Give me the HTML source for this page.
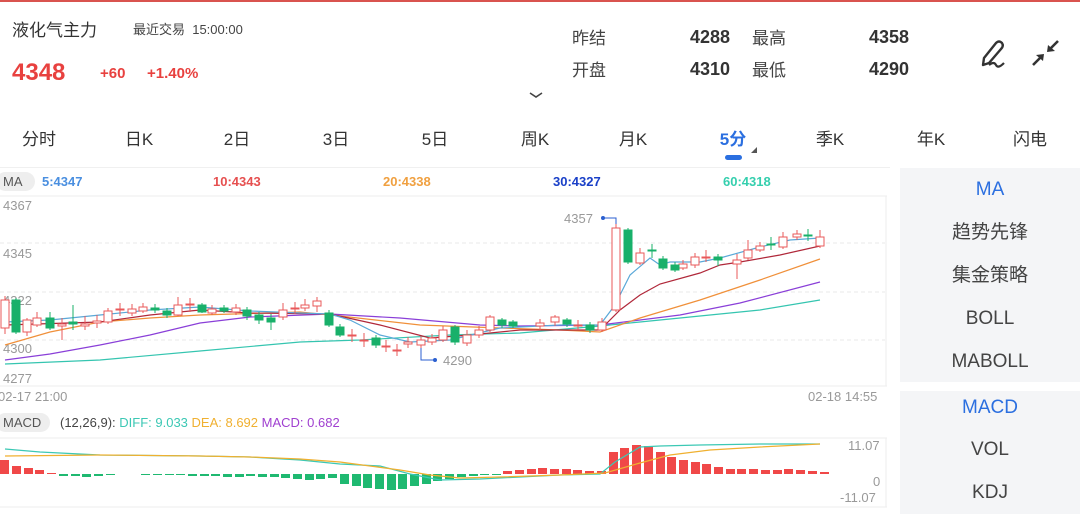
<!DOCTYPE html>
<html><head><meta charset="utf-8"><style>
*{margin:0;padding:0;box-sizing:border-box}
body{width:1080px;height:514px;background:#fff;position:relative;overflow:hidden;font-family:"Liberation Sans","Noto Sans CJK SC",sans-serif;color:#333}
.a{position:absolute;white-space:nowrap}
.tab{position:absolute;top:125px;font-size:17px;color:#333;transform:translateX(-50%)}
.side{position:absolute;left:900px;width:180px;background:#f4f5f7}
.si{position:absolute;left:900px;width:180px;text-align:center;font-size:19px;color:#444}
</style></head><body>
<div class="a" style="left:0;top:0;width:1080px;height:2px;background:#d9534f"></div>
<div class="a" style="left:12px;top:16px;font-size:17px;color:#333">液化气主力</div>
<div class="a" style="left:133px;top:19px;font-size:13px;color:#444">最近交易&nbsp; 15:00:00</div>
<div class="a" style="left:12px;top:59px;font-size:24px;font-weight:bold;color:#e8413f">4348</div>
<div class="a" style="left:100px;top:65px;font-size:15px;font-weight:bold;color:#e8413f">+60</div>
<div class="a" style="left:147px;top:65px;font-size:15px;font-weight:bold;color:#e8413f">+1.40%</div>
<div class="a" style="left:572px;top:24px;font-size:17px;color:#444">昨结</div>
<div class="a" style="left:572px;top:56px;font-size:17px;color:#444">开盘</div>
<div class="a" style="left:690px;top:27px;font-size:18px;font-weight:bold;color:#333">4288</div>
<div class="a" style="left:690px;top:59px;font-size:18px;font-weight:bold;color:#333">4310</div>
<div class="a" style="left:752px;top:24px;font-size:17px;color:#444">最高</div>
<div class="a" style="left:752px;top:56px;font-size:17px;color:#444">最低</div>
<div class="a" style="left:869px;top:27px;font-size:18px;font-weight:bold;color:#333">4358</div>
<div class="a" style="left:869px;top:59px;font-size:18px;font-weight:bold;color:#333">4290</div>
<svg class="a" style="left:528px;top:90px" width="16" height="10"><path d="M2 3 L8 7 L14 3" stroke="#444" stroke-width="1.6" fill="none"/></svg>
<svg class="a" style="left:976px;top:34px" width="90" height="40" viewBox="0 0 90 40">
<path d="M8 24 L20 9 Q23 6 26 9 Q28 12 25 15 L13 29 L7 31 Z" stroke="#333" stroke-width="2.4" fill="none" stroke-linejoin="round"/>
<path d="M13 31 Q18 27 20 31 Q22 35 28 29" stroke="#333" stroke-width="2.2" fill="none"/>
<path d="M57 31 L66 22" stroke="#333" stroke-width="2.6"/><path d="M68 20 L60 21 L67 27 Z" fill="#333"/>
<path d="M82 7 L73 16" stroke="#333" stroke-width="2.6"/><path d="M71 18 L79 17 L72 11 Z" fill="#333"/>
</svg>
<div class="tab" style="left:39px">分时</div>
<div class="tab" style="left:139px">日K</div>
<div class="tab" style="left:237px">2日</div>
<div class="tab" style="left:336px">3日</div>
<div class="tab" style="left:435px">5日</div>
<div class="tab" style="left:535px">周K</div>
<div class="tab" style="left:633px">月K</div>
<div class="tab" style="left:733px;color:#2b6fe0;font-weight:bold">5分</div>
<svg class="a" style="left:750px;top:146px" width="8" height="8"><path d="M7 1 L7 7 L1 7 Z" fill="#555"/></svg>
<div class="a" style="left:725px;top:155px;width:17px;height:5px;border-radius:3px;background:#2b6fe0"></div>
<div class="tab" style="left:830px">季K</div>
<div class="tab" style="left:931px">年K</div>
<div class="tab" style="left:1030px">闪电</div>

<div class="side" style="top:168px;height:214px"></div>
<div class="side" style="top:391px;height:123px"></div>
<div class="si" style="top:179px;color:#2b6fe0">MA</div>
<div class="si" style="top:217px">趋势先锋</div>
<div class="si" style="top:260px">集金策略</div>
<div class="si" style="top:308px">BOLL</div>
<div class="si" style="top:351px">MABOLL</div>
<div class="si" style="top:397px;color:#2b6fe0">MACD</div>
<div class="si" style="top:439px">VOL</div>
<div class="si" style="top:482px">KDJ</div>

<div class="a" style="left:0;top:167px;width:890px;height:1px;background:#f0f0f0"></div>
<div class="a" style="left:-4px;top:172px;width:39px;height:19px;border-radius:10px;background:#eeeeee;font-size:13px;color:#555;padding-left:7px;line-height:19px">MA</div>
<div class="a" style="left:42px;top:174px;font-size:13px;font-weight:bold;color:#4a8fe0">5:4347</div>
<div class="a" style="left:213px;top:174px;font-size:13px;font-weight:bold;color:#e65050">10:4343</div>
<div class="a" style="left:383px;top:174px;font-size:13px;font-weight:bold;color:#f0a040">20:4338</div>
<div class="a" style="left:553px;top:174px;font-size:13px;font-weight:bold;color:#1a40c8">30:4327</div>
<div class="a" style="left:723px;top:174px;font-size:13px;font-weight:bold;color:#35cfae">60:4318</div>

<div class="a" style="left:3px;top:198px;font-size:13px;color:#999">4367</div>
<div class="a" style="left:3px;top:246px;font-size:13px;color:#999">4345</div>
<div class="a" style="left:3px;top:293px;font-size:13px;color:#999">4322</div>
<div class="a" style="left:3px;top:341px;font-size:13px;color:#999">4300</div>
<div class="a" style="left:3px;top:371px;font-size:13px;color:#999">4277</div>
<div class="a" style="left:-2px;top:389px;font-size:13px;color:#999">02-17 21:00</div>
<div class="a" style="left:808px;top:389px;font-size:13px;color:#999">02-18 14:55</div>

<div class="a" style="left:-4px;top:413px;width:54px;height:19px;border-radius:10px;background:#eeeeee;font-size:13px;color:#555;padding-left:7px;line-height:19px">MACD</div>
<div class="a" style="left:60px;top:415px;font-size:13px;color:#444">(12,26,9): <span style="color:#3cc8b4">DIFF: 9.033</span> <span style="color:#f0b030">DEA: 8.692</span> <span style="color:#a040d0">MACD: 0.682</span></div>
<div class="a" style="left:848px;top:438px;font-size:13px;color:#999">11.07</div>
<div class="a" style="left:873px;top:474px;font-size:13px;color:#999">0</div>
<div class="a" style="left:840px;top:490px;font-size:13px;color:#999">-11.07</div>

<svg class="a" style="left:0;top:0" width="900" height="514">
<g stroke="#e8e8e8" stroke-width="1" stroke-dasharray="4 3">
<line x1="0" y1="243" x2="885" y2="243"/><line x1="0" y1="292" x2="885" y2="292"/><line x1="0" y1="340" x2="885" y2="340"/>
</g>
<g stroke="#eeeeee"><line x1="0" y1="196" x2="887" y2="196"/><line x1="0" y1="386" x2="887" y2="386"/><line x1="886" y1="196" x2="886" y2="386"/>
<line x1="0" y1="438" x2="887" y2="438"/><line x1="0" y1="507" x2="887" y2="507"/><line x1="886" y1="438" x2="886" y2="507"/></g>
<g fill="none" stroke-width="1.2">
<polyline stroke="#35c5b0" points="5,364 100,360 200,351 300,342 360,340 450,335 520,333 600,326 680,318 760,310 820,300"/>
<polyline stroke="#8a3fd8" points="5,360 50,354 100,345 150,335 200,323 250,317 330,314 400,318 480,325 520,326 600,325 680,315 740,303 820,282"/>
<polyline stroke="#f0903a" points="5,345 50,332 100,322 150,318 200,315 300,312 340,316 420,325 500,328 560,330 600,332 640,318 700,300 760,280 820,259"/>
<polyline stroke="#b0283a" points="5,325 100,322 150,315 200,310 250,313 330,314 380,325 430,338 470,335 520,330 600,330 620,310 640,295 660,284 700,273 720,265 740,262 780,255 820,246"/>
<polyline stroke="#5aa8d8" points="5,322 50,320 100,315 150,310 200,307 250,311 300,313 330,314 350,320 380,335 410,342 450,340 500,328 560,325 600,325 615,305 630,275 650,258 660,265 670,262 700,262 720,258 760,247 790,240 820,238"/>
</g>
<g stroke="#e8585a" fill="#fff" stroke-width="1">
<line x1="5" y1="296" x2="5" y2="334"/><rect x="1" y="300" width="8" height="28"/>
<line x1="27" y1="318" x2="27" y2="336"/><rect x="23" y="320" width="8" height="12"/>
<line x1="37" y1="312" x2="37" y2="327"/><rect x="33" y="318" width="8" height="7"/>
<line x1="62" y1="318" x2="62" y2="340"/><rect x="58" y="324" width="8" height="2"/>
<line x1="85" y1="316" x2="85" y2="330"/><rect x="81" y="324" width="8" height="2"/>
<line x1="97" y1="315" x2="97" y2="328"/><rect x="93" y="321" width="8" height="2"/>
<line x1="108" y1="308" x2="108" y2="324"/><rect x="104" y="311" width="8" height="11"/>
<line x1="120" y1="303" x2="120" y2="316"/><rect x="116" y="309" width="8" height="1"/>
<line x1="132" y1="304" x2="132" y2="316"/><rect x="128" y="309" width="8" height="4"/>
<line x1="143" y1="303" x2="143" y2="313"/><rect x="139" y="307" width="8" height="4"/>
<line x1="178" y1="297" x2="178" y2="316"/><rect x="174" y="305" width="8" height="10"/>
<line x1="190" y1="298" x2="190" y2="312"/><rect x="186" y="304" width="8" height="1"/>
<line x1="212" y1="305" x2="212" y2="315"/><rect x="208" y="309" width="8" height="4"/>
<line x1="236" y1="304" x2="236" y2="315"/><rect x="232" y="308" width="8" height="4"/>
<line x1="283" y1="303" x2="283" y2="320"/><rect x="279" y="310" width="8" height="7"/>
<line x1="295" y1="302" x2="295" y2="314"/><rect x="291" y="308" width="8" height="1"/>
<line x1="305" y1="299" x2="305" y2="311"/><rect x="301" y="305" width="8" height="3"/>
<line x1="317" y1="297" x2="317" y2="312"/><rect x="313" y="301" width="8" height="5"/>
<line x1="352" y1="329" x2="352" y2="342"/><rect x="348" y="335" width="8" height="1"/>
<line x1="364" y1="333" x2="364" y2="347"/><rect x="360" y="340" width="8" height="1"/>
<line x1="386" y1="340" x2="386" y2="352"/><rect x="382" y="346" width="8" height="1"/>
<line x1="397" y1="344" x2="397" y2="356"/><rect x="393" y="350" width="8" height="1"/>
<line x1="408" y1="337" x2="408" y2="348"/><rect x="404" y="342" width="8" height="2"/>
<line x1="421" y1="336" x2="421" y2="360"/><rect x="417" y="340" width="8" height="5"/>
<line x1="432" y1="334" x2="432" y2="345"/><rect x="428" y="338" width="8" height="4"/>
<line x1="443" y1="326" x2="443" y2="342"/><rect x="439" y="330" width="8" height="10"/>
<line x1="467" y1="330" x2="467" y2="346"/><rect x="463" y="335" width="8" height="8"/>
<line x1="479" y1="326" x2="479" y2="338"/><rect x="475" y="330" width="8" height="5"/>
<line x1="490" y1="315" x2="490" y2="332"/><rect x="486" y="317" width="8" height="13"/>
<line x1="540" y1="319" x2="540" y2="330"/><rect x="536" y="323" width="8" height="3"/>
<line x1="555" y1="315" x2="555" y2="326"/><rect x="551" y="317" width="8" height="5"/>
<line x1="578" y1="320" x2="578" y2="330"/><rect x="574" y="325" width="8" height="1"/>
<line x1="602" y1="318" x2="602" y2="332"/><rect x="598" y="322" width="8" height="8"/>
<line x1="616" y1="218" x2="616" y2="312"/><rect x="612" y="228" width="8" height="82"/>
<line x1="640" y1="248" x2="640" y2="265"/><rect x="636" y="253" width="8" height="10"/>
<line x1="683" y1="260" x2="683" y2="270"/><rect x="679" y="264" width="8" height="4"/>
<line x1="695" y1="253" x2="695" y2="268"/><rect x="691" y="257" width="8" height="8"/>
<line x1="706" y1="250" x2="706" y2="262"/><rect x="702" y="257" width="8" height="1"/>
<line x1="737" y1="254" x2="737" y2="279"/><rect x="733" y="260" width="8" height="4"/>
<line x1="748" y1="240" x2="748" y2="260"/><rect x="744" y="250" width="8" height="8"/>
<line x1="760" y1="242" x2="760" y2="252"/><rect x="756" y="246" width="8" height="4"/>
<line x1="783" y1="232" x2="783" y2="249"/><rect x="779" y="237" width="8" height="10"/>
<line x1="797" y1="230" x2="797" y2="240"/><rect x="793" y="234" width="8" height="3"/>
<line x1="820" y1="230" x2="820" y2="248"/><rect x="816" y="237" width="8" height="9"/>
</g>
<g stroke="#18b06a" fill="#18b06a" stroke-width="1">
<line x1="16" y1="298" x2="16" y2="334"/><rect x="12" y="300" width="8" height="32"/>
<line x1="50" y1="312" x2="50" y2="330"/><rect x="46" y="318" width="8" height="10"/>
<line x1="73" y1="305" x2="73" y2="330"/><rect x="69" y="322" width="8" height="2"/>
<line x1="155" y1="304" x2="155" y2="313"/><rect x="151" y="308" width="8" height="2"/>
<line x1="167" y1="308" x2="167" y2="318"/><rect x="163" y="311" width="8" height="4"/>
<line x1="202" y1="303" x2="202" y2="313"/><rect x="198" y="305" width="8" height="7"/>
<line x1="224" y1="305" x2="224" y2="313"/><rect x="220" y="308" width="8" height="3"/>
<line x1="247" y1="307" x2="247" y2="320"/><rect x="243" y="310" width="8" height="6"/>
<line x1="259" y1="312" x2="259" y2="324"/><rect x="255" y="315" width="8" height="5"/>
<line x1="271" y1="314" x2="271" y2="330"/><rect x="267" y="318" width="8" height="4"/>
<line x1="329" y1="310" x2="329" y2="327"/><rect x="325" y="313" width="8" height="12"/>
<line x1="340" y1="324" x2="340" y2="337"/><rect x="336" y="327" width="8" height="8"/>
<line x1="376" y1="335" x2="376" y2="348"/><rect x="372" y="338" width="8" height="7"/>
<line x1="455" y1="325" x2="455" y2="345"/><rect x="451" y="327" width="8" height="15"/>
<line x1="502" y1="318" x2="502" y2="328"/><rect x="498" y="320" width="8" height="5"/>
<line x1="513" y1="320" x2="513" y2="328"/><rect x="509" y="322" width="8" height="4"/>
<line x1="567" y1="318" x2="567" y2="327"/><rect x="563" y="320" width="8" height="4"/>
<line x1="590" y1="322" x2="590" y2="333"/><rect x="586" y="325" width="8" height="5"/>
<line x1="628" y1="228" x2="628" y2="264"/><rect x="624" y="230" width="8" height="32"/>
<line x1="652" y1="244" x2="652" y2="258"/><rect x="648" y="250" width="8" height="1"/>
<line x1="663" y1="256" x2="663" y2="270"/><rect x="659" y="259" width="8" height="9"/>
<line x1="675" y1="262" x2="675" y2="272"/><rect x="671" y="265" width="8" height="5"/>
<line x1="718" y1="254" x2="718" y2="266"/><rect x="714" y="257" width="8" height="3"/>
<line x1="771" y1="237" x2="771" y2="250"/><rect x="767" y="244" width="8" height="1"/>
<line x1="808" y1="229" x2="808" y2="241"/><rect x="804" y="235" width="8" height="1"/>
</g>
<g fill="#2b5fd0"><circle cx="603" cy="218" r="2"/><circle cx="435" cy="360" r="2"/></g>
<polyline points="603,218 616,218 616,224" stroke="#2b5fd0" fill="none"/>
<polyline points="421,348 421,360 435,360" stroke="#2b5fd0" fill="none"/>
<text x="564" y="223" font-size="13" fill="#999" font-family="Liberation Sans">4357</text>
<text x="443" y="365" font-size="13" fill="#999" font-family="Liberation Sans">4290</text>
<g fill="#f04848">
<rect x="0" y="460" width="9" height="14"/><rect x="12" y="466" width="9" height="8"/><rect x="24" y="468" width="9" height="6"/><rect x="35" y="470" width="9" height="4"/><rect x="47" y="473" width="9" height="1"/>
<rect x="503" y="471" width="9" height="3"/><rect x="515" y="470" width="9" height="4"/><rect x="527" y="469" width="9" height="5"/><rect x="538" y="468" width="9" height="6"/><rect x="550" y="469" width="9" height="5"/><rect x="562" y="469" width="9" height="5"/><rect x="573" y="470" width="9" height="4"/><rect x="585" y="471" width="9" height="3"/><rect x="597" y="471" width="9" height="3"/>
<rect x="609" y="452" width="9" height="22"/><rect x="620" y="448" width="9" height="26"/><rect x="632" y="445" width="9" height="29"/><rect x="644" y="446" width="9" height="28"/><rect x="656" y="452" width="9" height="22"/><rect x="667" y="457" width="9" height="17"/><rect x="679" y="460" width="9" height="14"/><rect x="691" y="462" width="9" height="12"/><rect x="702" y="464" width="9" height="10"/><rect x="714" y="467" width="9" height="7"/><rect x="726" y="469" width="9" height="5"/><rect x="737" y="469" width="9" height="5"/><rect x="749" y="469" width="9" height="5"/><rect x="761" y="470" width="9" height="4"/><rect x="773" y="470" width="9" height="4"/><rect x="784" y="469" width="9" height="5"/><rect x="796" y="470" width="9" height="4"/><rect x="808" y="471" width="9" height="3"/><rect x="820" y="472" width="9" height="2"/>
</g>
<g fill="#1fb971">
<rect x="59" y="474" width="9" height="2"/><rect x="71" y="474" width="9" height="2"/><rect x="82" y="474" width="9" height="3"/><rect x="94" y="474" width="9" height="2"/><rect x="106" y="474" width="9" height="1"/>
<rect x="141" y="474" width="9" height="1"/><rect x="153" y="474" width="9" height="1"/><rect x="165" y="474" width="9" height="1"/><rect x="176" y="474" width="9" height="1"/><rect x="188" y="474" width="9" height="2"/><rect x="200" y="474" width="9" height="2"/><rect x="211" y="474" width="9" height="2"/><rect x="223" y="474" width="9" height="3"/><rect x="235" y="474" width="9" height="3"/><rect x="246" y="474" width="9" height="2"/><rect x="258" y="474" width="9" height="3"/><rect x="270" y="474" width="9" height="3"/><rect x="281" y="474" width="9" height="4"/><rect x="293" y="474" width="9" height="5"/><rect x="305" y="474" width="9" height="6"/><rect x="316" y="474" width="9" height="5"/><rect x="328" y="474" width="9" height="4"/>
<rect x="340" y="474" width="9" height="10"/><rect x="352" y="474" width="9" height="12"/><rect x="363" y="474" width="9" height="14"/><rect x="375" y="474" width="9" height="15"/><rect x="387" y="474" width="9" height="16"/><rect x="398" y="474" width="9" height="15"/><rect x="410" y="474" width="9" height="12"/><rect x="422" y="474" width="9" height="10"/><rect x="433" y="474" width="9" height="7"/><rect x="445" y="474" width="9" height="5"/><rect x="457" y="474" width="9" height="3"/><rect x="469" y="474" width="9" height="2"/><rect x="480" y="474" width="9" height="1"/><rect x="492" y="474" width="9" height="1"/>
</g>
<g fill="none" stroke-width="1.2">
<polyline stroke="#3cc8b4" points="5,449 40,452 100,455 200,456 250,457 300,460 340,464 380,466 410,474 440,480 480,479 520,477 560,475 600,474 615,462 640,447 660,446 700,445 760,444 820,444"/>
<polyline stroke="#f0b030" points="5,456 100,455 200,456 250,457 300,459 340,462 400,470 430,475 460,478 500,477 560,475 605,473 640,463 670,455 710,450 760,447 820,444"/>
</g>
</svg>
</body></html>
